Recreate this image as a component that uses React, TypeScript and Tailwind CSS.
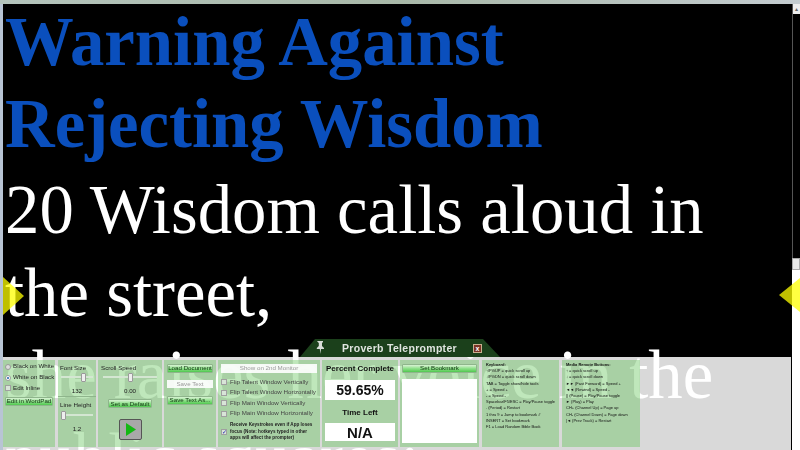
import React from 'react';

const keyboard = [
  '↑/PGUP = quick scroll up',
  '↓/PGDN = quick scroll down',
  'TAB = Toggle show/hide tools',
  '+ = Speed +',
  '- = Speed -',
  'Spacebar/F5/ESC = Play/Pause toggle',
  '. (Period) = Restart',
  '1 thru 9 = Jump to bookmark #',
  'INSERT = Set bookmark',
  'F1 = Load Random Bible Book',
];

const remote = [
  '↑ = quick scroll up',
  '↓ = quick scroll down',
  '►► (Fast Forward) = Speed +',
  '◄◄ (Rewind) = Speed -',
  '|| (Pause) = Play/Pause toggle',
  '► (Play) = Play',
  'CH+ (Channel Up) = Page up',
  'CH- (Channel Down) = Page down',
  '|◄ (Prev Track) = Restart',
];

const flips = [
  'Flip Talent Window Vertically',
  'Flip Talent Window Horizontally',
  'Flip Main Window Vertically',
  'Flip Main Window Horizontally',
];

function GreenButton({ label, className }: { label: string; className: string }) {
  return (
    <div
      className={`flex items-center justify-center whitespace-nowrap rounded-[1px] border border-[#8fb58c] bg-gradient-to-b from-[#d8f2d4] via-[#8ee08a] to-[#4ec84e] text-[6.2px] leading-none text-[#123312] ${className}`}
    >
      {label}
    </div>
  );
}

function Slider({ thumb }: { thumb: string }) {
  return (
    <div className="relative mx-[3px] h-[9px]">
      <div className="absolute left-0 right-0 top-[3px] h-[2px] bg-[#d4e6d2]" />
      <div className={`absolute top-0 h-[9px] w-[5px] rounded-[1px] border border-[#9a9a9a] bg-[#eeeeee] ${thumb}`} />
    </div>
  );
}

function Box({ checked }: { checked?: boolean }) {
  return (
    <span className="flex h-[6px] w-[6px] shrink-0 items-center justify-center border border-[#a0a0a0] bg-[#d8e4d8] text-[6px] leading-none text-[#1c1cb0]">
      {checked ? '✓' : ''}
    </span>
  );
}

function Panel({ className, children }: { className: string; children?: React.ReactNode }) {
  return <div className={`h-[87px] shrink-0 bg-[#60c456]/40 ${className}`}>{children}</div>;
}

function Tools() {
  return (
    <div className="absolute bottom-0 left-[3px] h-[93px] w-[788px] bg-white/85 font-['Liberation_Sans',sans-serif] text-[#222]">
      <div className="flex gap-[2px] pt-[3px] blur-[0.3px]">
        <Panel className="w-[52px] whitespace-nowrap px-[2px] pt-[1px] text-[6.2px] leading-none">
          <div className="flex h-[11px] items-center gap-[2px]">
            <span className="h-[6px] w-[6px] shrink-0 rounded-full border border-[#999] bg-[#dddddd]" />
            <span>Black on White</span>
          </div>
          <div className="flex h-[11px] items-center gap-[2px]">
            <span className="flex h-[6px] w-[6px] shrink-0 items-center justify-center rounded-full border border-[#999] bg-white">
              <span className="h-[2px] w-[2px] rounded-full bg-[#1d5fa8]" />
            </span>
            <span>White on Black</span>
          </div>
          <div className="flex h-[10px] items-center gap-[2px]">
            <Box />
            <span>Edit Inline</span>
          </div>
          <GreenButton label="Edit in WordPad" className="mt-[4px] h-[9px]" />
        </Panel>
        <Panel className="ml-[1px] w-[38px] whitespace-nowrap text-[6.2px] leading-none">
          <div className="h-[37px] border-b border-[#8fb58c] pt-[5px]">
            <div className="pl-[2px]">Font Size</div>
            <div className="mt-[2px]">
              <Slider thumb="left-[20px]" />
            </div>
            <div className="mt-[6px] text-center">132</div>
          </div>
          <div className="pt-[5px]">
            <div className="pl-[2px]">Line Height</div>
            <div className="mt-[3px]">
              <Slider thumb="left-0" />
            </div>
            <div className="mt-[5.5px] text-center">1.2</div>
          </div>
        </Panel>
        <Panel className="w-[64px] whitespace-nowrap px-[2px] pt-[5px] text-[6.2px] leading-none">
          <div className="pl-[1px]">Scroll Speed</div>
          <div className="mt-[2px]">
            <Slider thumb="left-[25px]" />
          </div>
          <div className="mt-[6px] text-center">0.00</div>
          <GreenButton label="Set as Default" className="mx-[8px] mt-[5px] h-[9px]" />
          <div className="mx-auto mt-[11px] flex h-[21px] w-[23px] items-center justify-center rounded-[2px] border border-[#555] bg-[#a8a8a8]">
            <svg width="11" height="13" viewBox="0 0 11 13">
              <polygon points="1,0 11,6.5 1,13" fill="#14b814" />
            </svg>
          </div>
        </Panel>
        <Panel className="w-[52px] px-[3px] pt-[4px]">
          <GreenButton label="Load Document" className="h-[9px]" />
          <div className="mt-[7px] flex h-[8px] items-center justify-center bg-white/90 text-[6.2px] leading-none text-[#9a9a9a]">
            Save Text
          </div>
          <GreenButton label="Save Text As..." className="mt-[8px] h-[9px]" />
        </Panel>
        <Panel className="w-[102px] px-[3px] pt-[4px] text-[6.2px] leading-none text-[#444]">
          <div className="flex h-[9px] items-center justify-center bg-white/90 text-[#9a9a9a]">Show on 2nd Monitor</div>
          <div className="mt-[5.5px] flex flex-col gap-[3.5px]">
            {flips.map((flip) => (
              <div key={flip} className="flex h-[7px] items-center gap-[3px] whitespace-nowrap">
                <Box />
                <span>{flip}</span>
              </div>
            ))}
          </div>
          <div className="mt-[5px] flex items-center gap-[3px]">
            <Box checked />
            <div className="whitespace-nowrap text-[4.6px] font-bold leading-[6.5px] text-[#222]">
              <div>Receive Keystrokes even if App loses</div>
              <div>focus (Note: hotkeys typed in other</div>
              <div>apps will affect the prompter)</div>
            </div>
          </div>
        </Panel>
        <Panel className="w-[76px] whitespace-nowrap px-[3px] pt-[4px] text-center font-bold text-[#111]">
          <div className="text-[8px] leading-[10px]">Percent Complete</div>
          <div className="mt-[6px] flex h-[20px] items-center justify-center bg-white text-[14px] leading-none">59.65%</div>
          <div className="mt-[8px] text-[8px] leading-[10px]">Time Left</div>
          <div className="mt-[5px] flex h-[18px] items-center justify-center bg-white text-[15px] leading-none">N/A</div>
        </Panel>
        <Panel className="w-[79px] px-[2px] pt-[4px]">
          <GreenButton label="Set Bookmark" className="h-[9px]" />
          <div className="mt-[6px] h-[64px] bg-white" />
        </Panel>
        <Panel className="ml-[1px] w-[77px] whitespace-nowrap pl-[4px] pt-[2px] text-[4px] leading-[6.2px] text-[#111]">
          <div className="font-bold">Keyboard:</div>
          {keyboard.map((row) => (
            <div key={row}>{row}</div>
          ))}
        </Panel>
        <Panel className="ml-[1px] w-[78px] whitespace-nowrap pl-[4px] pt-[2px] text-[4px] leading-[6.2px] text-[#111]">
          <div className="font-bold">Media Remote Buttons:</div>
          {remote.map((row) => (
            <div key={row}>{row}</div>
          ))}
        </Panel>
      </div>
    </div>
  );
}

export default function App() {
  return (
    <div className="relative h-[450px] w-[800px] overflow-hidden bg-black">
      <div className="relative z-10 h-[4px] bg-gradient-to-r from-[#b4c4bc] via-[#a8b8a8] to-[#c4ccd0]" />
      <div className="flex h-[446px]">
        <div className="relative z-10 w-[3px] shrink-0 bg-[#b8c4d4]" />
        <div className="w-[789px] shrink-0 pl-[2px] font-['Liberation_Serif',serif] text-[68.75px] leading-[82.5px]">
          <div className="-mt-[3.5px] font-bold text-[#0a4fbd]">
            <div>Warning Against</div>
            <div>Rejecting Wisdom</div>
          </div>
          <div className="mt-[3.5px] whitespace-nowrap text-white">
            <div>20 Wisdom calls aloud in</div>
            <div>the street,</div>
            <div>she raises her voice in the</div>
            <div>public squares;</div>
          </div>
        </div>
        <div className="flex w-[8px] shrink-0 flex-col">
          <div className="flex h-[10px] items-center justify-center border-l border-[#555] bg-[#eeeeee] text-[6px] leading-none text-[#666]">▴</div>
          <div className="h-[244px] border-l border-[#555] bg-black" />
          <div className="h-[12px] border border-[#aaa] bg-[#e8e8e8]" />
          <div className="flex-1 bg-white" />
        </div>
      </div>
      <svg className="absolute left-[3px] top-[277px]" width="21" height="38" viewBox="0 0 21 38">
        <polygon points="0,0 21,19 0,38" fill="#ffff00" fillOpacity="0.75" />
      </svg>
      <svg className="absolute right-0 top-[278px]" width="21" height="34" viewBox="0 0 21 34">
        <polygon points="21,0 0,17 21,34" fill="#ffff00" fillOpacity="0.75" />
      </svg>
      <Tools />
      <div className="absolute left-[300px] top-[339px] h-[18px] w-[200px]">
        <svg className="absolute inset-0" width="200" height="18" viewBox="0 0 200 18">
          <polygon points="0,18 15,0 183,0 200,18" fill="#1b401b" />
          <path d="M17 2h6v1l-1 1v3l2 2v1h-3l-.6 5-.6-5h-3v-1l2-2V4l-1-1z" fill="#d8dcd8" />
        </svg>
        <div className="absolute left-[42px] top-[3px] whitespace-nowrap font-['Liberation_Sans',sans-serif] text-[10.5px] font-bold leading-[12px] tracking-[0.3px] text-[#dfe4df] blur-[0.3px]">
          Proverb Teleprompter
        </div>
        <div className="absolute left-[173px] top-[5px] flex h-[9px] w-[9px] items-center justify-center border border-[#c8b090] bg-[#7a3426] font-['Liberation_Sans',sans-serif] text-[7px] font-bold leading-none text-white">
          x
        </div>
      </div>
    </div>
  );
}
